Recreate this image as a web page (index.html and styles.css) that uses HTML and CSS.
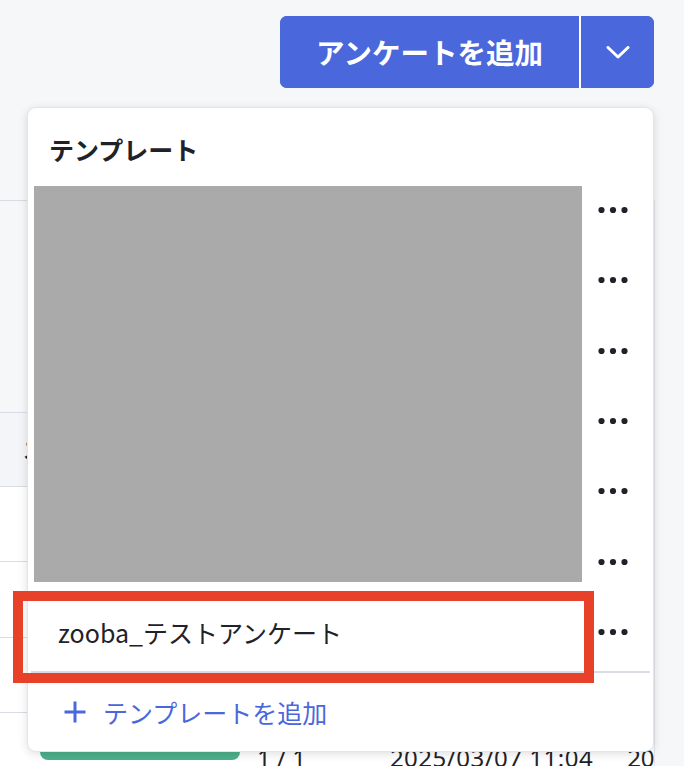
FILE: index.html
```html
<!DOCTYPE html>
<html lang="ja">
<head>
<meta charset="utf-8">
<title>アンケート</title>
<link rel="stylesheet" href="styles.css">
</head>
<body>
<div class="page">
  <div class="toolbar">
    <div class="split-btn">
      <button class="btn-main">アンケートを追加</button>
      <button class="btn-drop" aria-label="メニュー">
        <svg width="24" height="13" viewBox="0 0 24 13"><path d="M2 1.5 L12 11 L22 1.5" fill="none" stroke="#fff" stroke-width="3" stroke-linecap="round" stroke-linejoin="round"/></svg>
      </button>
    </div>
  </div>

  <div class="table-area">
    <div class="filter-area"></div>
    <div class="thead"><span class="th-label">ステータス</span></div>
    <div class="trow"></div>
    <div class="trow tall"></div>
    <div class="trow"></div>
    <div class="trow last">
      <span class="pill"></span>
      <span class="cell c-count">1 / 1</span>
      <span class="cell c-date">2025/03/07 11:04</span>
      <span class="cell c-next">2025</span>
    </div>
  </div>

  <div class="menu">
    <div class="menu-title">テンプレート</div>
    <div class="menu-list">
      <div class="menu-row"><span class="row-name"></span><span class="row-more"><svg width="32" height="8" viewBox="0 0 32 8"><circle cx="3.5" cy="4" r="3.1"/><circle cx="15" cy="4" r="3.1"/><circle cx="26.5" cy="4" r="3.1"/></svg></span></div>
      <div class="menu-row"><span class="row-name"></span><span class="row-more"><svg width="32" height="8" viewBox="0 0 32 8"><circle cx="3.5" cy="4" r="3.1"/><circle cx="15" cy="4" r="3.1"/><circle cx="26.5" cy="4" r="3.1"/></svg></span></div>
      <div class="menu-row"><span class="row-name"></span><span class="row-more"><svg width="32" height="8" viewBox="0 0 32 8"><circle cx="3.5" cy="4" r="3.1"/><circle cx="15" cy="4" r="3.1"/><circle cx="26.5" cy="4" r="3.1"/></svg></span></div>
      <div class="menu-row"><span class="row-name"></span><span class="row-more"><svg width="32" height="8" viewBox="0 0 32 8"><circle cx="3.5" cy="4" r="3.1"/><circle cx="15" cy="4" r="3.1"/><circle cx="26.5" cy="4" r="3.1"/></svg></span></div>
      <div class="menu-row"><span class="row-name"></span><span class="row-more"><svg width="32" height="8" viewBox="0 0 32 8"><circle cx="3.5" cy="4" r="3.1"/><circle cx="15" cy="4" r="3.1"/><circle cx="26.5" cy="4" r="3.1"/></svg></span></div>
      <div class="menu-row"><span class="row-name"></span><span class="row-more"><svg width="32" height="8" viewBox="0 0 32 8"><circle cx="3.5" cy="4" r="3.1"/><circle cx="15" cy="4" r="3.1"/><circle cx="26.5" cy="4" r="3.1"/></svg></span></div>
      <div class="menu-row"><span class="row-name">zooba_テストアンケート</span><span class="row-more"><svg width="32" height="8" viewBox="0 0 32 8"><circle cx="3.5" cy="4" r="3.1"/><circle cx="15" cy="4" r="3.1"/><circle cx="26.5" cy="4" r="3.1"/></svg></span></div>
    </div>
    <div class="menu-footer">
      <svg class="plus" width="24" height="24" viewBox="0 0 24 24"><path d="M12 1.5 V22.5 M1.5 12 H22.5" fill="none" stroke="#4a68db" stroke-width="3"/></svg>
      <span>テンプレートを追加</span>
    </div>
    <div class="redact"></div>
  </div>

  <div class="annot"></div>
</div>
</body>
</html>
```

FILE: styles.css
```css
* { box-sizing: border-box; }

body {
  margin: 0;
  background: #f6f7f9;
  font-family: "Noto Sans CJK JP", "Noto Sans", sans-serif;
  color: #1f2329;
}

.page {
  position: relative;
  width: 684px;
  height: 766px;
  overflow: hidden;
}

/* toolbar */
.toolbar {
  display: flex;
  justify-content: flex-end;
  height: 88px;
  padding: 16px 30px 0 0;
}

.split-btn {
  display: flex;
  height: 72px;
  border-radius: 7px;
  overflow: hidden;
  background: #4a68db;
}

.btn-main {
  width: 301px;
  border: 0;
  border-right: 2px solid #fff;
  background: #4a68db;
  color: #fff;
  font-family: "Noto Sans CJK JP", sans-serif;
  font-weight: 700;
  font-size: 28.5px;
  line-height: 1;
  padding: 0;
}

.btn-drop {
  width: 73px;
  border: 0;
  background: #4a68db;
  display: flex;
  align-items: center;
  justify-content: center;
  padding: 0;
}

/* background table */
.table-area {
  margin-top: 112px;
  width: 655px;
  border-right: 1px solid #e3e5ea;
  overflow: hidden;
}

.filter-area {
  height: 212px;
  border-top: 1px solid #d9dce3;
}

.thead {
  height: 74px;
  border-top: 1px solid #d9dce3;
  background: #f4f5f8;
  display: flex;
  align-items: center;
  padding-left: 23px;
  font-size: 20px;
  font-weight: 700;
}

.trow {
  height: 75px;
  border-top: 1px solid #d9dce3;
  background: #fff;
}

.trow.tall { height: 76px; }

.trow.last {
  height: 80px;
  display: flex;
  align-items: flex-start;
  font-family: "Noto Sans", sans-serif;
  font-size: 24px;
  line-height: 24px;
  white-space: nowrap;
}

.pill {
  flex-shrink: 0;
  margin: 22px 0 0 40px;
  width: 200px;
  height: 25px;
  border-radius: 8px;
  background: #4db08b;
}

.cell { margin-top: 33px; flex-shrink: 0; }
.c-count { margin-left: 17px; }
.c-date { margin-left: 84px; letter-spacing: 0.5px; }
.c-next { margin-left: 34px; }

/* template menu */
.menu {
  position: absolute;
  left: 27px;
  top: 107px;
  width: 627px;
  height: 645px;
  background: #fff;
  border: 1px solid #e4e5e9;
  border-radius: 9px;
  box-shadow: 0 2px 10px rgba(0, 0, 0, 0.13);
  display: flex;
  flex-direction: column;
}

.menu-title {
  height: 67px;
  padding: 23px 0 0 21px;
  font-size: 25px;
  line-height: 36px;
  font-weight: 700;
  color: #1f2329;
}

.menu-list {
  margin: 0 3px;
  padding-bottom: 4px;
  border-bottom: 2px solid #d9dce3;
}

.menu-row {
  display: flex;
  align-items: center;
  height: 70.3px;
}

.row-name {
  flex: 1;
  padding-left: 27px;
  font-size: 25px;
  line-height: 36px;
  color: #1f2329;
}

.row-more {
  width: 60px;
  margin-right: 6px;
  display: flex;
  justify-content: center;
  fill: #1f2329;
}

.menu-footer {
  flex: 1;
  display: flex;
  align-items: center;
  gap: 16px;
  padding-left: 35px;
  color: #4a68db;
  font-size: 25px;
  line-height: 36px;
}

.redact {
  position: absolute;
  left: 6px;
  top: 78px;
  width: 548px;
  height: 396px;
  background: #aaaaaa;
}

/* annotation frame */
.annot {
  position: absolute;
  left: 13px;
  top: 591px;
  width: 581px;
  height: 92px;
  border: 10px solid #e8412a;
}
```
